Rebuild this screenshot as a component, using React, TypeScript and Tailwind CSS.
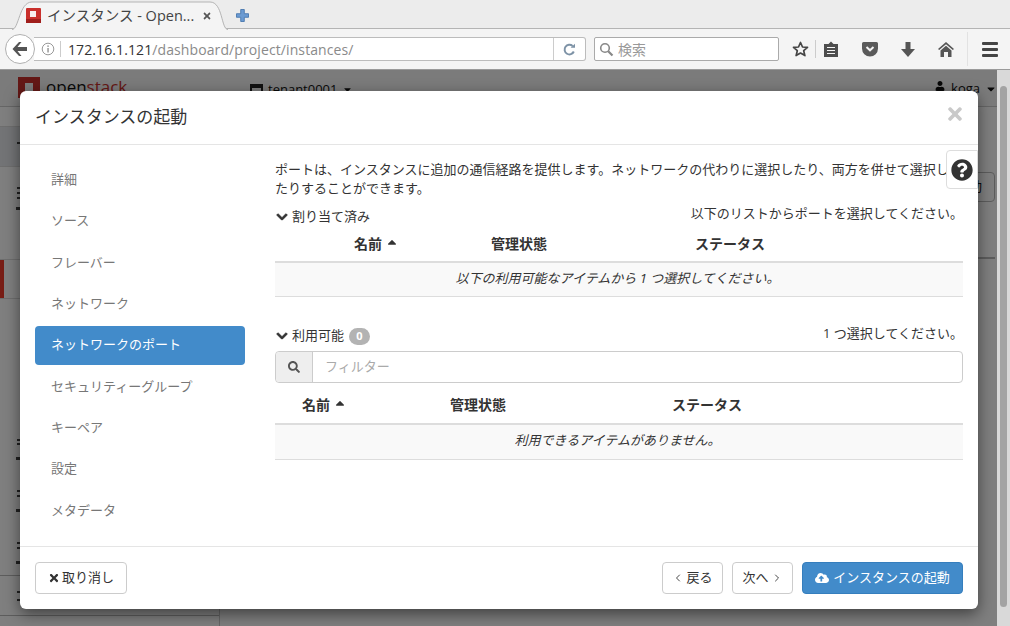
import React from 'react';
import { FaTimes, FaChevronDown, FaSearch, FaQuestionCircle, FaCloudUploadAlt, FaUser, FaCaretDown, FaCaretUp } from 'react-icons/fa';
import { ChevronLeft, ChevronRight } from 'lucide-react';

const steps = ['詳細', 'ソース', 'フレーバー', 'ネットワーク', 'ネットワークのポート', 'セキュリティーグループ', 'キーペア', '設定', 'メタデータ'];

const BackArrow = () => (
  <svg width="18" height="16" viewBox="0 0 18 16"><path d="M8 1 L1.5 8 L8 15 L10.5 15 L6.5 10 H16 V6 H6.5 L10.5 1 Z" fill="#555" /></svg>
);

const Favicon = () => (
  <svg width="15" height="15" viewBox="0 0 15 15">
    <rect x="0" y="0" width="15" height="15" rx="1" fill="#c9302c" />
    <rect x="4" y="3" width="6" height="6" fill="#f8eeee" />
    <rect x="0" y="11" width="15" height="4" fill="#a01f1c" />
  </svg>
);

const Toolbar = () => (
  <div className="h-[41px] bg-[#f4f4f4] flex items-center pl-[5px] border-b border-[#9a9a9a] shrink-0">
    <div className="w-[30px] h-[30px] rounded-full bg-white border border-[#b0b0b0] flex items-center justify-center z-10 shrink-0">
      <BackArrow />
    </div>
    <div className="w-[552px] h-6 -ml-[1px] bg-white border border-l-0 border-[#bcbcbc] rounded-r-[3px] flex items-center shrink-0">
      <svg width="14" height="14" viewBox="0 0 14 14" className="ml-[7px] shrink-0">
        <circle cx="7" cy="7" r="5.8" fill="none" stroke="#999" strokeWidth="1" />
        <rect x="6.3" y="6" width="1.5" height="4.5" fill="#999" />
        <rect x="6.3" y="3.4" width="1.5" height="1.5" fill="#999" />
      </svg>
      <div className="w-px h-[16px] bg-[#ccc] ml-[5px] mr-[7px] shrink-0" />
      <span className="text-[14px] tracking-[0.1px] text-[#333] whitespace-nowrap">172.16.1.121<span className="text-[#8a8a8a]">/dashboard/project/instances/</span></span>
      <div className="flex-1" />
      <div className="w-[32px] h-[22px] border-l border-[#ccc] flex items-center justify-center shrink-0">
        <svg width="13" height="13" viewBox="0 0 13 13"><path d="M10.8 8.5 A4.8 4.8 0 1 1 9.6 3" fill="none" stroke="#7d92a6" strokeWidth="2" /><path d="M7.6 4.8 H12 V0.8 Z" fill="#7d92a6" /></svg>
      </div>
    </div>
    <div className="w-[185px] h-6 ml-[8px] bg-white border border-[#aaa] rounded-[2px] flex items-center shrink-0">
      <svg width="15" height="15" viewBox="0 0 15 15" className="ml-[4px]"><circle cx="6" cy="6" r="4.3" fill="none" stroke="#888" strokeWidth="1.6" /><path d="M9.2 9.2 L13.5 13.5" stroke="#888" strokeWidth="2.2" /></svg>
      <span className="ml-[4px] text-[14px] text-[#999]">検索</span>
    </div>
    <div className="ml-[12px] w-[18px] flex justify-center shrink-0">
      <svg width="17" height="16" viewBox="0 0 17 16"><path d="M8.5 1.5 L10.5 6 L15.5 6.4 L11.7 9.7 L12.9 14.6 L8.5 12 L4.1 14.6 L5.3 9.7 L1.5 6.4 L6.5 6 Z" fill="none" stroke="#444" strokeWidth="1.7" strokeLinejoin="round" /></svg>
    </div>
    <div className="w-px h-[18px] bg-[#ccc] ml-[6px] shrink-0" />
    <div className="ml-[8px] shrink-0">
      <svg width="14" height="16" viewBox="0 0 14 16"><path d="M0 3 H4.5 L7 0.5 L9.5 3 H14 V16 H0 Z" fill="#4d4d4d" /><path d="M3 6.5 H11 M3 9.5 H11 M3 12.5 H11" stroke="#f4f4f4" strokeWidth="1.1" /></svg>
    </div>
    <div className="ml-[24px] shrink-0">
      <svg width="16" height="15" viewBox="0 0 16 15"><path d="M1.5 0 H14.5 A1.5 1.5 0 0 1 16 1.5 V6.5 A8 8 0 0 1 0 6.5 V1.5 A1.5 1.5 0 0 1 1.5 0 Z" fill="#5a5a5a" /><path d="M4.5 5 L8 8.3 L11.5 5" fill="none" stroke="#f4f4f4" strokeWidth="2" /></svg>
    </div>
    <div className="ml-[23px] shrink-0">
      <svg width="14" height="15" viewBox="0 0 14 15"><path d="M4.5 0 H9.5 V7 H14 L7 15 L0 7 H4.5 Z" fill="#555" /></svg>
    </div>
    <div className="ml-[23px] shrink-0">
      <svg width="16" height="15" viewBox="0 0 16 15"><path d="M8 0 L16 7 L14.8 8 L8 2.2 L1.2 8 L0 7 Z" fill="#555" /><path d="M8 3.8 L13.5 8.5 V15 H10 V10 H6 V15 H2.5 V8.5 Z" fill="#555" /></svg>
    </div>
    <div className="w-px h-[34px] bg-[#e2e2e2] ml-[13px] shrink-0" />
    <div className="ml-[14px] flex flex-col gap-[3px] shrink-0">
      <div className="w-4 h-[3px] bg-[#444] rounded-[1px]" />
      <div className="w-4 h-[3px] bg-[#444] rounded-[1px]" />
      <div className="w-4 h-[3px] bg-[#444] rounded-[1px]" />
    </div>
  </div>
);

const TabStrip = () => (
  <div className="h-[29px] bg-[#ececec] border-b border-[#b4b4b4] flex shrink-0 relative">
    <div className="relative w-[216px] h-[29px] ml-[12px] flex items-center pl-[14px] shrink-0">
      <svg width="216" height="30" viewBox="0 0 216 30" className="absolute left-0 top-0">
        <path d="M0 29.5 C7 29.5 7 2 20 2 H198 C211 2 209 29.5 216 29.5" fill="#f4f4f4" stroke="#b4b4b4" strokeWidth="1" />
      </svg>
      <span className="relative flex items-center mt-[2px]">
        <Favicon />
        <span className="ml-[6px] text-[14.5px] text-[#444] whitespace-nowrap w-[155px]">インスタンス - Open...</span>
        <FaTimes className="text-[#555] text-[10px]" />
      </span>
    </div>
    <div className="ml-[8px] mt-[9px] shrink-0">
      <svg width="13" height="13" viewBox="0 0 13 13"><path d="M4.7 0.5 H8.3 V4.7 H12.5 V8.3 H8.3 V12.5 H4.7 V8.3 H0.5 V4.7 H4.7 Z" fill="#6c9bd2" stroke="#3c6ea8" strokeWidth="0.8" /></svg>
    </div>
  </div>
);

// clipped glyph ends of the sidebar labels, the dialog covers the rest
const Dash = ({ className }: { className: string }) => <div className={`h-[2px] bg-[#444] ${className}`} />;

// dashboard that sits dimmed behind the dialog
const Dashboard = () => (
  <div className="h-full bg-white flex flex-col text-[#111] text-[13px]">
    <div className="h-[37px] bg-[#f6f6f6] border-b border-[#ccc] flex items-start pt-[6px] shrink-0">
      <svg width="24" height="24" viewBox="0 0 24 24" className="ml-[17px] shrink-0"><path d="M1 1 H23 V22 H16 V7 H8 V22 H1 Z" fill="#c9302c" /></svg>
      <span className="ml-[5px] mt-[1px] w-[204px] text-[17px] leading-[20px] shrink-0">open<span className="text-[#c9302c]">stack</span></span>
      <span className="w-[13px] h-[11px] mt-[8px] border-2 border-t-4 border-[#222] shrink-0" />
      <span className="ml-[5px] mt-[3px] leading-[20px]">tenant0001</span>
      <FaCaretDown className="ml-[5px] mt-[8px] text-[11px]" />
      <div className="flex-1" />
      <FaUser className="mt-[5px] text-[10px]" />
      <span className="ml-[6px] mt-[2px] leading-[20px]">koga</span>
      <FaCaretDown className="ml-[5px] mt-[7px] text-[12px]" />
    </div>
    <div className="flex-1 flex min-h-0">
      <div className="w-[220px] border-r border-[#ccc] flex flex-col shrink-0 overflow-hidden">
        <div className="h-[20px] border-b border-[#ddd] shrink-0" />
        <div className="h-[40px] bg-[#e6e9ec] border-b border-[#ddd] pl-[17px] pt-[15px] shrink-0">
          <Dash className="w-[3px]" />
        </div>
        <div className="h-[92px] pl-[17px] pt-[20px] flex flex-col gap-[3px] shrink-0">
          <Dash className="w-[3px]" />
          <Dash className="w-[3px]" />
          <Dash className="w-[3px]" />
          <Dash className="w-[4px] -ml-[1px] mt-[5px] h-[3px]" />
        </div>
        <div className="h-[40px] flex border-y border-[#ddd] shrink-0">
          <div className="w-[4px] bg-[#f03a2a] shrink-0" />
        </div>
        <div className="h-[140px] shrink-0" />
        <div className="h-[137px] pl-[17px] border-b border-[#bbb] shrink-0">
          <Dash className="w-[3px]" />
          <Dash className="w-[3px] mt-[2px]" />
          <Dash className="w-[4px] -ml-[1px] mt-[12px] h-[3px]" />
          <Dash className="w-[3px] mt-[30px]" />
          <Dash className="w-[3px] mt-[3px]" />
          <Dash className="w-[4px] -ml-[1px] mt-[12px] h-[3px]" />
          <Dash className="w-[3px] mt-[30px]" />
          <Dash className="w-[3px] mt-[3px]" />
          <Dash className="w-[4px] -ml-[1px] mt-[12px] h-[3px]" />
        </div>
        <div className="h-[40px] pl-[17px] pt-[15px] border-b border-[#bbb] shrink-0">
          <Dash className="w-[3px]" />
          <Dash className="w-[3px] mt-[6px]" />
        </div>
      </div>
      <div className="flex-1 min-w-0 flex flex-col pr-[2px]">
        <div className="h-[65px] shrink-0" />
        <div className="self-end w-[80px] h-[30px] border border-[#bbb] rounded-[4px] flex items-center justify-end pr-[12px] shrink-0">起動</div>
        <div className="h-[55px] shrink-0" />
        <div className="h-[2px] bg-[#bbb] shrink-0" />
      </div>
    </div>
  </div>
);

const SortableHead = ({ offset, widths }: { offset: string; widths: string[] }) => (
  <div className={`flex items-center font-bold text-[14px] ${offset}`}>
    <div className={`flex items-center ${widths[0]}`}>
      <span>名前</span>
      <FaCaretUp className="ml-[3px] -mt-[3px] text-[14px]" />
    </div>
    <div className={widths[1]}>管理状態</div>
    <div>ステータス</div>
  </div>
);

const EmptyRow = ({ text, height }: { text: string; height: string }) => (
  <div className={`${height} pb-[2px] pr-[3px] bg-[#f9f9f9] border-t-2 border-b border-t-[#ddd] border-b-[#ddd] flex items-center justify-center italic`}>
    {text}
  </div>
);

const Dialog = () => (
  <div className="absolute left-[20px] top-[21px] w-[958px] h-[518px] bg-white rounded-[6px] shadow-[0_5px_15px_rgba(0,0,0,0.5)] flex flex-col text-[13px] text-[#333]">
    <div className="h-[54px] border-b border-[#e5e5e5] flex items-center justify-between pl-[15px] pr-[13px] shrink-0">
      <span className="text-[17px] text-[#333] mt-[-2px]">インスタンスの起動</span>
      <FaTimes className="text-[#c9c9c9] text-[20px] mt-[-8px]" />
    </div>
    <div className="flex-1 flex min-h-0">
      <div className="w-[225px] pl-[15px] pt-[15px] shrink-0">
        {steps.map((s, i) => (
          <div key={s} className={`w-[210px] h-[39px] mb-[2.4px] pl-[16px] flex items-center rounded-[4px] ${i === 4 ? 'bg-[#428bca] text-white' : 'text-[#777]'}`}>
            {s}
          </div>
        ))}
      </div>
      <div className="w-[718px] pl-[30px] pt-[15px] relative">
        <p className="leading-[19px] pr-[8px]">ポートは、インスタンスに追加の通信経路を提供します。ネットワークの代わりに選択したり、両方を併せて選択したりすることができます。</p>
        <div className="flex items-center justify-between mt-[8px] h-[20px]">
          <span className="flex items-center mt-[1px]"><FaChevronDown className="text-[12px] stroke-[40] ml-[1px] mr-[4px] text-[#333]" />割り当て済み</span>
          <span className="-mt-[4px]">以下のリストからポートを選択してください。</span>
        </div>
        <SortableHead offset="pl-[79px] h-[35px]" widths={['w-[137px]', 'w-[204px]']} />
        <EmptyRow text="以下の利用可能なアイテムから 1 つ選択してください。" height="h-[36px]" />
        <div className="flex items-center justify-between mt-[29px] h-[20px]">
          <span className="flex items-center">
            <FaChevronDown className="text-[12px] stroke-[40] ml-[1px] mr-[4px] text-[#333]" />利用可能
            <span className="ml-[5px] w-[21px] h-[17px] rounded-full bg-[#b3b3b3] text-white text-[11px] font-bold flex items-center justify-center">0</span>
          </span>
          <span className="-mt-[4px]">1 つ選択してください。</span>
        </div>
        <div className="mt-[5px] h-[32px] flex border border-[#ccc] rounded-[4px]">
          <div className="w-[37px] bg-[#eee] border-r border-[#ccc] rounded-l-[4px] flex items-center justify-center shrink-0">
            <FaSearch className="text-[12px] text-[#555]" />
          </div>
          <span className="pl-[12px] self-center text-[#aaa]">フィルター</span>
        </div>
        <SortableHead offset="pl-[27px] h-[40px] pt-[3px]" widths={['w-[148px]', 'w-[222px]']} />
        <EmptyRow text="利用できるアイテムがありません。" height="h-[37px]" />
      </div>
    </div>
    <div className="h-[63px] border-t border-[#e5e5e5] flex items-center pl-[15px] pr-[15px] shrink-0">
      <button className="w-[92px] h-[32px] border border-[#ccc] rounded-[4px] flex items-center justify-center bg-white">
        <FaTimes className="text-[12px] mr-[2px]" />取り消し
      </button>
      <div className="flex-1" />
      <button className="w-[61px] h-[32px] border border-[#ccc] rounded-[4px] flex items-center justify-center bg-white">
        <ChevronLeft size={12} strokeWidth={1.8} className="mr-[2px]" />戻る
      </button>
      <button className="ml-[9px] w-[61px] h-[32px] border border-[#ccc] rounded-[4px] flex items-center justify-center bg-white">
        次へ<ChevronRight size={12} strokeWidth={1.8} className="ml-[2px]" />
      </button>
      <button className="ml-[9px] w-[161px] h-[32px] border border-[#357ebd] rounded-[4px] flex items-center justify-center bg-[#428bca] text-white">
        <FaCloudUploadAlt className="text-[14px] mr-[4px]" />インスタンスの起動
      </button>
    </div>
    <div className="absolute right-0 top-[59px] w-[32px] h-[39px] bg-white border border-[#ddd] rounded-l-[4px] flex items-center justify-center">
      <FaQuestionCircle className="text-[22px] text-[#333]" />
    </div>
  </div>
);

export default function App() {
  return (
    <div className="w-[1010px] h-[626px] overflow-hidden flex flex-col bg-white font-['Open_Sans','Noto_Sans_CJK_JP',sans-serif]">
      <TabStrip />
      <Toolbar />
      <div className="flex-1 flex min-h-0">
        <div className="flex-1 min-w-0 relative">
          <Dashboard />
          <div className="absolute inset-0 bg-black/50" />
          <Dialog />
        </div>
        <div className="w-[13px] bg-[#d9d9d9] px-[3px] pt-[16px] shrink-0">
          <div className="h-[521px] rounded-full bg-[#a3a3a3]" />
        </div>
      </div>
    </div>
  );
}
